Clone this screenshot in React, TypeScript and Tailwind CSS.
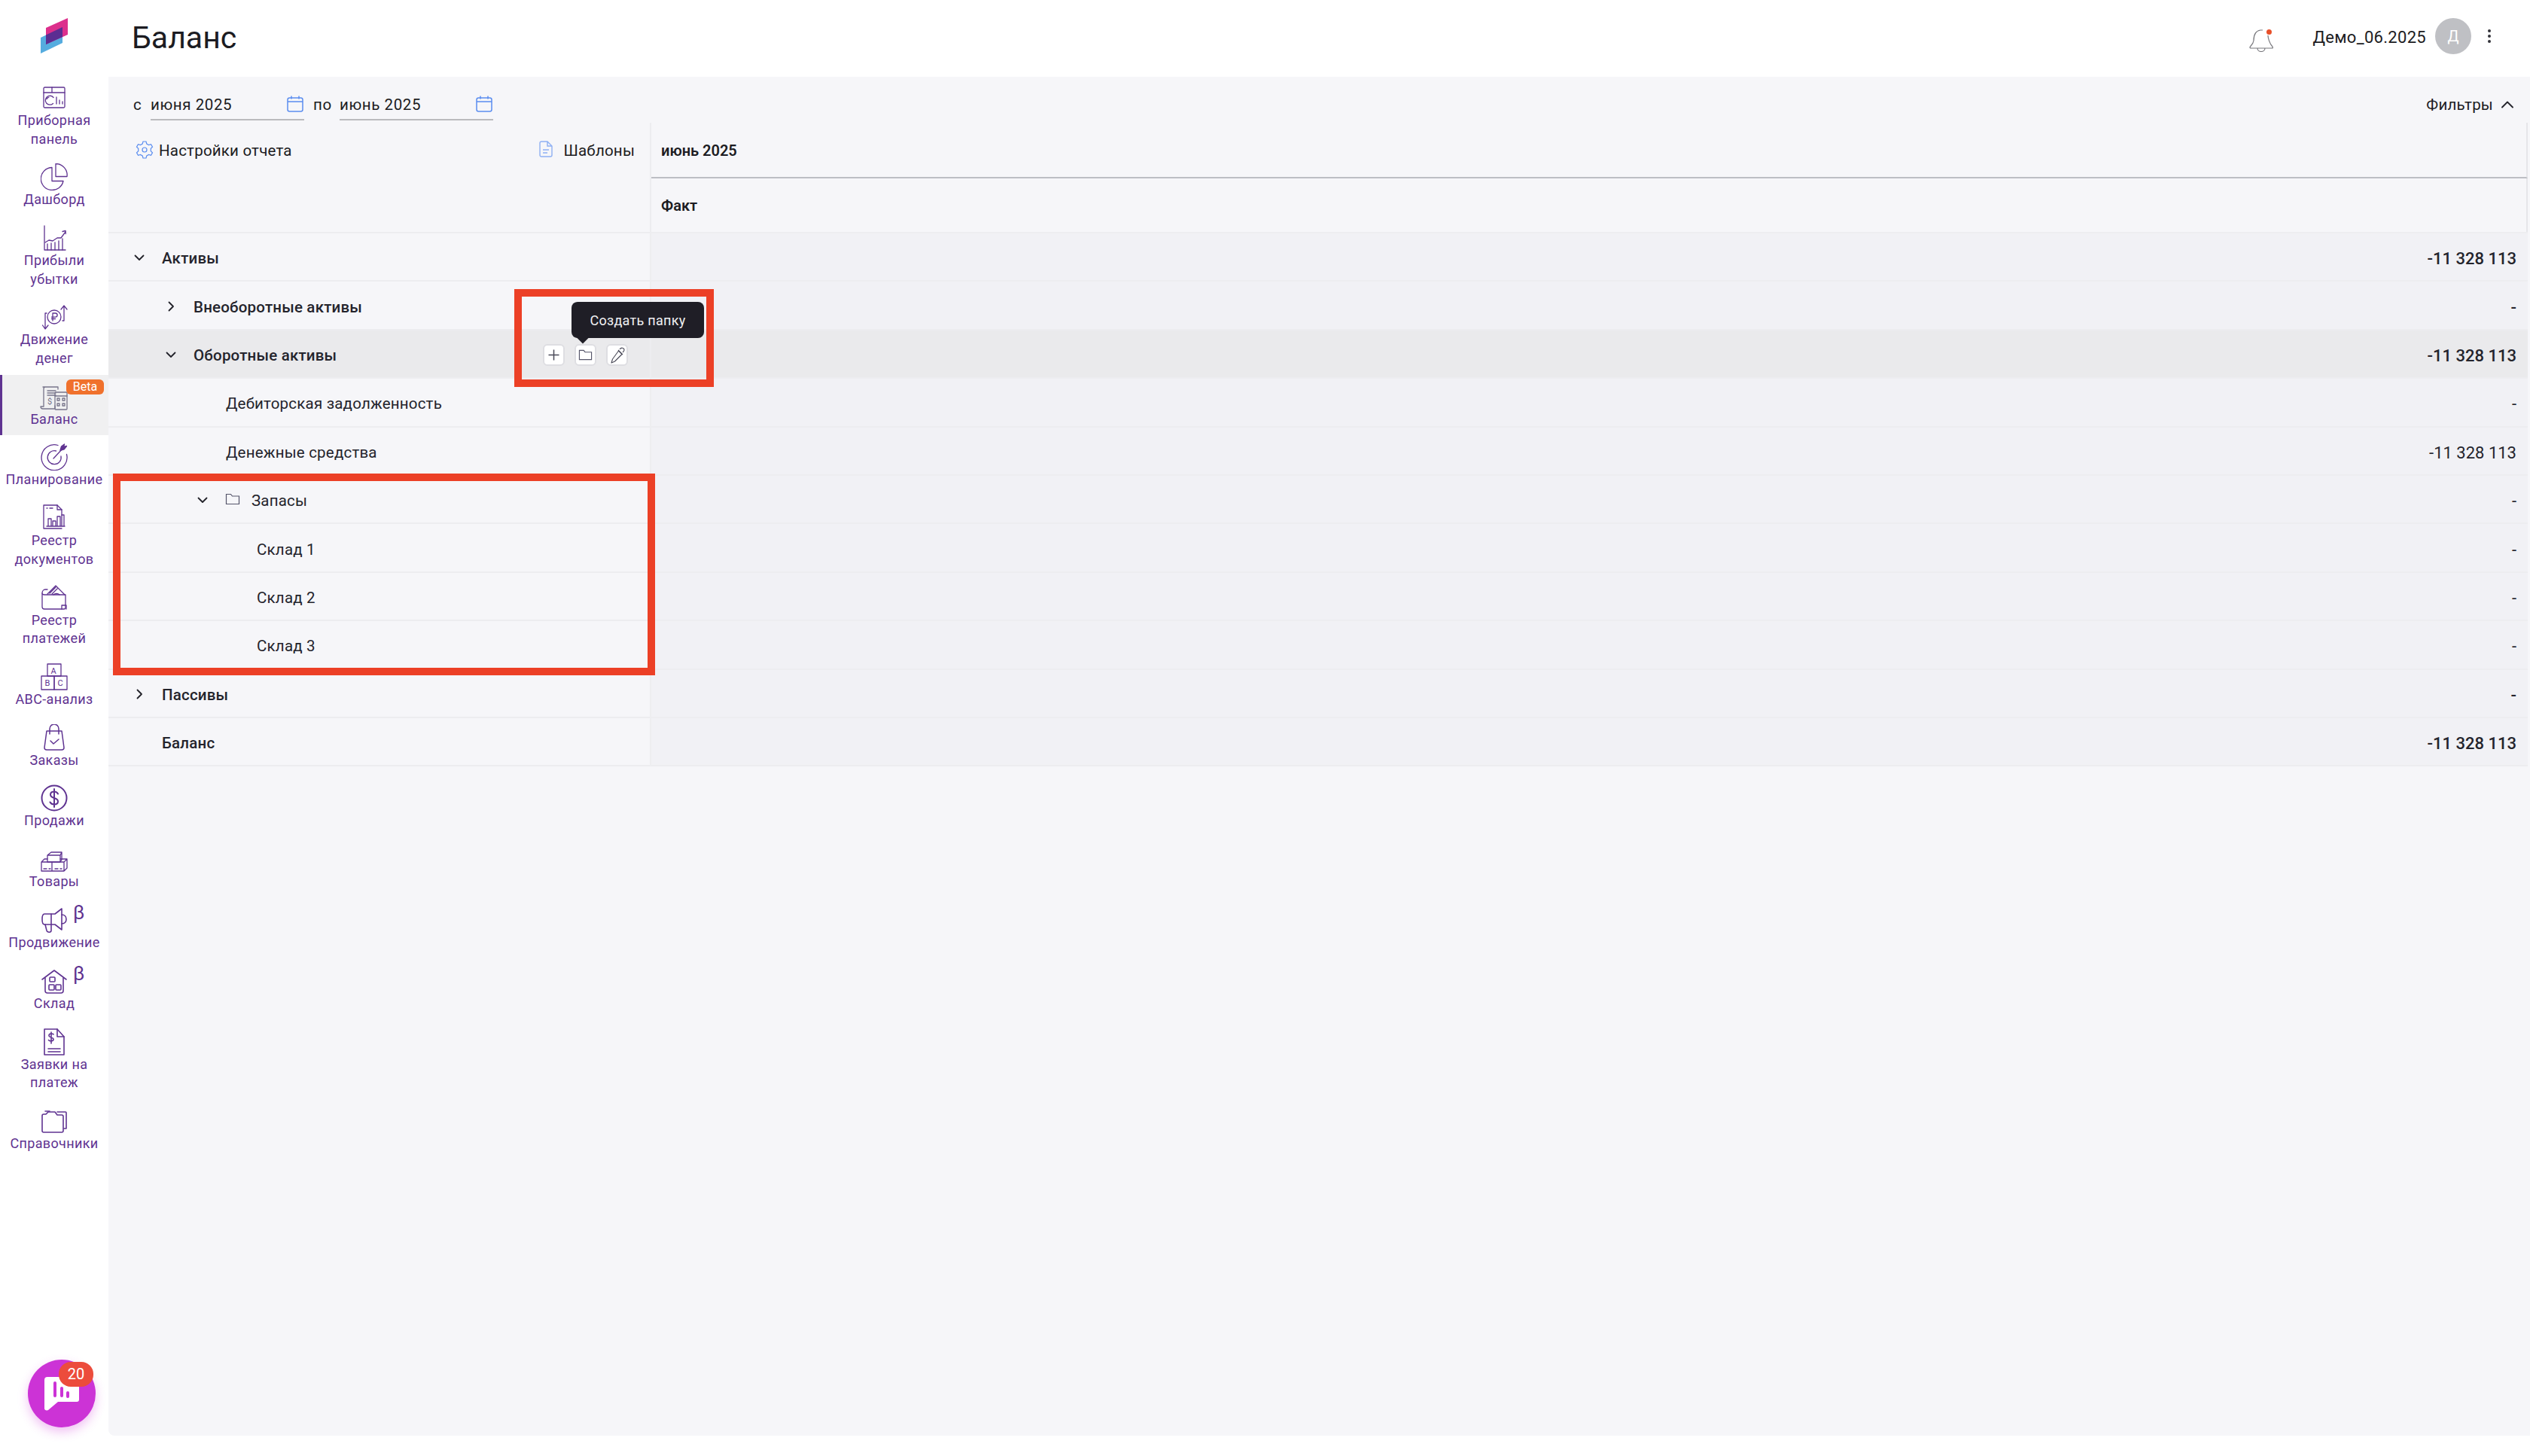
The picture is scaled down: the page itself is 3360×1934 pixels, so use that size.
import type { ReactNode } from 'react';

const PURPLE = '#5f3391';

function Ico({ w = 36, h = 36, box = '0 0 36 36', sw = 1.3, children }: { w?: number; h?: number; box?: string; sw?: number; children: ReactNode }) {
  return (
    <svg width={w} height={h} viewBox={box} fill="none" stroke={PURPLE} strokeWidth={sw} strokeLinecap="round" strokeLinejoin="round">
      {children}
    </svg>
  );
}

const icons: Record<string, ReactNode> = {
  panel: (
    <Ico>
      <rect x="4" y="4" width="28" height="27" rx="1.5" />
      <path d="M4 11h28M15 4v7" />
      <path d="M17 17.5a6 6 0 1 0 -.5 8 M8 19.5a6 6 0 0 1 3-2.5" />
      <path d="M21 17v9M25 21v5M29 23v3" />
    </Ico>
  ),
  pie: (
    <Ico>
      <path d="M16 6a15 15 0 1 0 15 18H16z" transform="translate(-1 -.5)" />
      <path d="M20 0.5a15 15 0 0 1 15 17H20z" />
    </Ico>
  ),
  profit: (
    <Ico>
      <path d="M5 2v32h28" />
      <path d="M6 24l5-3 5 1 6-4 5 0 6-8" />
      <path d="M29 9.5l4-1 .2 4" />
      <path d="M9 34v-8M14 34v-9M19 34v-10M24 34v-12M29 34v-15" />
    </Ico>
  ),
  money: (
    <Ico>
      <circle cx="18" cy="18" r="9" />
      <path d="M16 23v-10h3.5a2.6 2.6 0 0 1 0 5.200h-5M14.500 20.500h5" />
      <path d="M31 23h2V5M29 8l4-5 4 5" transform="translate(-2 0)" />
      <path d="M6 13H4v20M0.500 29L4 34l4-5" transform="translate(2 0)" />
    </Ico>
  ),
  balance: (
    <Ico w={38} h={36} box="0 0 38 36">
      <path stroke="#77748a" d="M4 5h20v3M7 5c-2 0-2 2-2 3v23H1c0 2 1 3 3 3h16v-4" />
      <path stroke="#77748a" d="M10 10h11M10 13h11M10 16h11" />
      <text x="10" y="28" fontSize="11" fill="#77748a" stroke="none" fontFamily="Roboto, sans-serif">$</text>
      <rect stroke="#77748a" x="20" y="12" width="16" height="23" rx="1" />
      <path stroke="#77748a" d="M20 17h16" />
      <rect stroke="#77748a" x="23" y="20" width="3" height="3" />
      <rect stroke="#77748a" x="30" y="20" width="3" height="3" />
      <rect stroke="#77748a" x="23" y="27" width="3" height="3" />
      <rect stroke="#77748a" x="30" y="27" width="3" height="3" />
    </Ico>
  ),
  plan: (
    <Ico>
      <path d="M23 2.500a17 17 0 1 0 11.500 12" />
      <path d="M20.500 10a9 9 0 1 0 6.500 7" />
      <path d="M17 20l12-13" />
      <path fill={PURPLE} d="M26 9l1.500-5 4-3-1 3.500 4-1-3.500 4.500-5 1.500z" />
    </Ico>
  ),
  docs: (
    <Ico>
      <path d="M28 14V7l-6-6H4v31h24" />
      <path d="M22 1v6h6M8 5h1M12 5h4" />
      <path d="M10 29V19h4v10M16 29V22h4v7M22 29V16h4v13M28 29V14h3v15M8 29h24" />
    </Ico>
  ),
  wallet: (
    <Ico>
      <path d="M2 12c0-3 2-5 4-5l3 0" />
      <path d="M2 12v18c0 2 1 3 3 3h26c1 0 2-1 2-2V14H5c-2 0-3-1-3-2z" />
      <path d="M9 13L20 2l12 12M12 12l8-8M15 13l8-8M25 14c-2-2-6-2-8 0" />
      <path d="M28 33v-5h6v5" />
    </Ico>
  ),
  abc: (
    <Ico box="0 0 36 36">
      <rect x="9" y="1" width="18" height="16" />
      <rect x="1" y="17" width="17" height="18" />
      <rect x="18" y="17" width="17" height="18" />
      <text x="13.500" y="13.500" fontSize="11" fill={PURPLE} stroke="none" fontFamily="Roboto, sans-serif">A</text>
      <text x="5.500" y="30" fontSize="11" fill={PURPLE} stroke="none" fontFamily="Roboto, sans-serif">B</text>
      <text x="22.500" y="30" fontSize="11" fill={PURPLE} stroke="none" fontFamily="Roboto, sans-serif">C</text>
    </Ico>
  ),
  orders: (
    <Ico sw={1.5}>
      <path d="M8 9h20l3 22c0 2-1 3-3 3H8c-2 0-3-1-3-3z" />
      <path d="M12 13V6a6 6 0 0 1 12 0v7" />
      <path d="M13 22l4 4 7-6" />
    </Ico>
  ),
  sales: (
    <Ico sw={2}>
      <circle cx="18" cy="18" r="16.500" />
      <path d="M23 12.500c-1-2-3-3-5-3-3 0-5 1.500-5 4s2 3.500 5 4.500 5 2 5 4.500-2 4-5 4c-2.500 0-4.500-1-5.500-3M18 6v24" />
    </Ico>
  ),
  goods: (
    <Ico>
      <path d="M9 13l5-4h14l-2 4H9zM26 13v9M28 9v10l-2 3M9 13v9h17" />
      <path d="M1 22l4-4M1 22h14v12H1zM15 22h16v12H15zM31 22l4-4v12l-4 4M5 18h4M26 18h9" />
      <path d="M4 31h4M11 31h2M19 31h4M26 31h2" />
    </Ico>
  ),
  promo: (
    <Ico>
      <path d="M5 10h14L28 3v28l-9-7H5c-2 0-3-3-3-7s1-7 3-7z" strokeWidth={1.6} />
      <path d="M14 10v14M28 11c4 0 6 3 6 6s-2 6-6 6M6 24l2 8c1 3 6 3 6 0v-8" strokeWidth={1.6} />
    </Ico>
  ),
  stock: (
    <Ico sw={1.6}>
      <path d="M2 16L18 4l16 12" />
      <path d="M6 14v17c0 2 1 3 3 3h18c2 0 3-1 3-3V14" />
      <rect x="12" y="13" width="7" height="6" rx="1" />
      <rect x="11" y="23" width="7" height="7" rx="1" />
      <rect x="20" y="23" width="7" height="7" rx="1" />
    </Ico>
  ),
  request: (
    <Ico sw={1.6}>
      <path d="M5 1h17l9 10v24H5z" />
      <path d="M22 1v10h9M10 27h16M10 31h16" />
      <path d="M17 8c-1-1.500-6-1.500-6 1.500s6 2 6 5-5 3-6.500 1M14 5v15" />
    </Ico>
  ),
  dict: (
    <Ico sw={1.6}>
      <path d="M2 11c0-1 1-2 2-2h3l3-3h9l3 4h6c1 0 2 1 2 2v19c0 1-1 2-2 2H4c-1 0-2-1-2-2z" />
      <path d="M6 5h6M22 6h11c1 0 1 1 1 1v21h-3" />
    </Ico>
  ),
};

const menu: { key: string; lines: string[]; active?: boolean; beta?: boolean; greek?: boolean }[] = [
  { key: 'panel', lines: ['Приборная', 'панель'] },
  { key: 'pie', lines: ['Дашборд'] },
  { key: 'profit', lines: ['Прибыли', 'убытки'] },
  { key: 'money', lines: ['Движение', 'денег'] },
  { key: 'balance', lines: ['Баланс'], active: true, beta: true },
  { key: 'plan', lines: ['Планирование'] },
  { key: 'docs', lines: ['Реестр', 'документов'] },
  { key: 'wallet', lines: ['Реестр', 'платежей'] },
  { key: 'abc', lines: ['ABC-анализ'] },
  { key: 'orders', lines: ['Заказы'] },
  { key: 'sales', lines: ['Продажи'] },
  { key: 'goods', lines: ['Товары'] },
  { key: 'promo', lines: ['Продвижение'], greek: true },
  { key: 'stock', lines: ['Склад'], greek: true },
  { key: 'request', lines: ['Заявки на', 'платеж'] },
  { key: 'dict', lines: ['Справочники'] },
];

function MenuItem({ item }: { item: (typeof menu)[number] }) {
  return (
    <div className={item.active ? 'relative flex flex-col items-center -mt-[11px] -mb-[9px] pt-[11px] pb-[9px] pr-[3px] bg-[#f0f0f1] border-l-[3px] border-[#5f3391]' : 'relative flex flex-col items-center'}>
      <div className="h-9 flex items-center justify-center">{icons[item.key]}</div>
      {item.lines.map((l) => (
        <div key={l} className="text-[18px] leading-[24.5px] tracking-[0.35px] text-[#5f3391] whitespace-nowrap">{l}</div>
      ))}
      {item.beta && (
        <span className="absolute top-[6px] right-[6px] w-[50px] h-5 rounded-md bg-[#f0712c] text-white text-[16px] leading-5 text-center">Beta</span>
      )}
      {item.greek && <span className="absolute -top-[9px] left-[97px] text-[26px] leading-[34px] text-[#5f3391]">β</span>}
    </div>
  );
}

function Calendar() {
  return (
    <svg width="22" height="22" viewBox="0 0 22 22" fill="none" stroke="#5b8def" strokeWidth="1.500" className="absolute right-[1px] top-[-3px]">
      <rect x="1" y="3" width="20" height="18" rx="2.500" />
      <path d="M1 8h20M6 0.500v4M16 0.500v4" />
    </svg>
  );
}

function Chevron({ dir }: { dir: 'down' | 'right' }) {
  return (
    <svg width="16" height="16" viewBox="0 0 16 16" fill="none" stroke="#22222a" strokeWidth="1.800" strokeLinecap="round" strokeLinejoin="round">
      {dir === 'down' ? <path d="M2.500 5.500L8 11l5.500-5.500" /> : <path d="M5.500 2.500L11 8l-5.500 5.500" />}
    </svg>
  );
}

function Folder({ size = 20 }: { size?: number }) {
  return (
    <svg width={size} height={size} viewBox="0 0 20 20" fill="none" stroke="#55556a" strokeWidth="1.200">
      <path d="M1.500 16.500V3.500h6l2 2.500h9v10.500z" />
    </svg>
  );
}

type Row = {
  label: string;
  pad: string;
  chevron?: 'down' | 'right';
  value: string;
  bold?: boolean;
  folder?: boolean;
  hover?: boolean;
};

const rows: Row[] = [
  { label: 'Активы', pad: 'pl-[33px]', chevron: 'down', value: '-11 328 113', bold: true },
  { label: 'Внеоборотные активы', pad: 'pl-[75px]', chevron: 'right', value: '-', bold: true },
  { label: 'Оборотные активы', pad: 'pl-[75px]', chevron: 'down', value: '-11 328 113', bold: true, hover: true },
  { label: 'Дебиторская задолженность', pad: 'pl-[156px]', value: '-' },
  { label: 'Денежные средства', pad: 'pl-[156px]', value: '-11 328 113' },
  { label: 'Запасы', pad: 'pl-[117px]', chevron: 'down', value: '-', folder: true },
  { label: 'Склад 1', pad: 'pl-[197px]', value: '-' },
  { label: 'Склад 2', pad: 'pl-[197px]', value: '-' },
  { label: 'Склад 3', pad: 'pl-[197px]', value: '-' },
  { label: 'Пассивы', pad: 'pl-[33px]', chevron: 'right', value: '-', bold: true },
  { label: 'Баланс', pad: 'pl-[71px]', value: '-11 328 113', bold: true },
];

function TableRow({ row }: { row: Row }) {
  return (
    <div className={row.hover ? 'flex h-[64.4px] border-b-2 border-[#ededf0] bg-[#eaeaec]' : 'flex h-[64.4px] border-b-2 border-[#ededf0]'}>
      <div className={`w-[721px] shrink-0 flex items-center pt-[5px] ${row.pad} border-r-2 border-[#ededf0] text-[20.5px] tracking-[0.2px] ${row.bold ? 'font-medium' : ''}`}>
        {row.chevron && (
          <span className="w-[16px] mr-[22px] flex justify-center -mt-[3px]">
            <Chevron dir={row.chevron} />
          </span>
        )}
        {row.folder && (
          <span className="mr-[15px] -mt-[6px] flex">
            <Folder />
          </span>
        )}
        <span className="whitespace-nowrap text-[#24242c]">{row.label}</span>
      </div>
      <div className={row.hover ? 'flex-1 flex items-center justify-end pt-[5px] pr-[15px]' : 'flex-1 flex items-center justify-end pt-[5px] pr-[15px] bg-[#f1f1f5]'}>
        <span className={row.bold ? 'text-[22px] font-medium text-[#24242c]' : 'text-[22px] text-[#24242c]'}>{row.value}</span>
      </div>
    </div>
  );
}

export default function App() {
  return (
    <div className="relative flex h-screen w-full bg-white overflow-hidden font-['Roboto',sans-serif] text-[#1c1c22]">
      {/* Sidebar */}
      <aside className="w-[144px] shrink-0 flex flex-col relative">
        <div className="h-[112px] relative shrink-0">
          <svg width="36" height="47" viewBox="54 24 36 47" className="absolute left-[54px] top-[24px]">
            <path d="M54 50L83 36v21L54 71z" fill="#55acdf" />
            <path d="M61 37L90 24v22L61 59z" fill="#dc2f8c" />
            <path d="M61 46.600L83 36v13L61 59z" fill="#5b2d92" />
          </svg>
        </div>
        <nav className="flex flex-col gap-[20.3px]">
          {menu.map((m) => (
            <MenuItem key={m.key} item={m} />
          ))}
        </nav>
        <div className="mt-auto mb-[38px] ml-[37px] relative w-[90px] h-[90px] rounded-full bg-[#cc33d6] shadow-[0_6px_14px_rgba(204,51,214,0.3)] flex items-center justify-center">
          <svg width="46" height="46" viewBox="0 0 46 46" className="ml-[-1px]">
            <path d="M4 1h38a4 4 0 0 1 4 4v26a3 3 0 0 1-3 3H18L5 45c-2 1-5 0-5-2V5a4 4 0 0 1 4-4z" fill="#fff" />
            <rect x="12" y="7" width="4" height="21" rx="2" fill="#cc33d6" />
            <rect x="21" y="14" width="4" height="14" rx="2" fill="#cc33d6" />
            <rect x="29" y="20" width="4" height="9" rx="2" fill="#cc33d6" />
          </svg>
          <span className="absolute left-[41px] top-[3px] w-[46px] h-[33px] rounded-[16px] bg-[#ec4c3c] text-white text-[20px] leading-[33px] text-center">20</span>
        </div>
      </aside>

      {/* Main */}
      <main className="flex-1 min-w-0 flex flex-col">
        <header className="h-[102px] shrink-0 flex items-center pl-[31px] pr-[52px]">
          <h1 className="text-[41px] leading-none text-[#1c1c22] -mt-[2px]">Баланс</h1>
          <div className="ml-auto flex items-center">
            <div className="relative w-[32px] h-[32px] mr-[52px] mt-[4px]">
              <svg width="32" height="32" viewBox="0 0 32 32" fill="none" stroke="#77777c" strokeWidth="1.200">
                <path d="M1 26c0-2 4-3 5-9 0-7 2-13 9-14h3M25 10c0 3 2 11 6 15 1 2 0 2-1 2H3c-2 0-2-1-2-1M11 27c0 6 10 6 10 0" />
              </svg>
              <span className="absolute right-[2px] top-[2px] w-[7px] h-[7px] rounded-full bg-[#e8502a]" />
            </div>
            <span className="text-[22px] tracking-[0.3px] mr-[12px] -mt-[3px]">Демо_06.2025</span>
            <span className="w-[48px] h-[48px] rounded-full bg-[#bfc0c4] text-white text-[20px] flex items-center justify-center mr-[22px] -mt-[6px]">Д</span>
            <span className="flex flex-col gap-[3px] -mt-[6px]">
              <span className="w-[4px] h-[4px] rounded-full bg-[#33333a]" />
              <span className="w-[4px] h-[4px] rounded-full bg-[#33333a]" />
              <span className="w-[4px] h-[4px] rounded-full bg-[#33333a]" />
            </span>
          </div>
        </header>

        <section className="flex-1 mb-[27px] bg-[#f6f6f9] rounded-bl-lg pr-[3px] flex flex-col">
          {/* Dates */}
          <div className="h-[61px] shrink-0 flex pl-[33px] pt-[21px] pr-[19px] text-[20.5px] tracking-[0.6px] leading-[32px]">
            <span className="w-[23px]">с</span>
            <div className="relative w-[204px] h-[37px] border-b-2 border-[#bbbbbe]">
              <span>июня 2025</span>
              <span className="absolute right-0 top-[7px] w-[22px] h-[22px]"><Calendar /></span>
            </div>
            <span className="w-[47px] pl-[12px]">по</span>
            <div className="relative w-[204px] h-[37px] border-b-2 border-[#bbbbbe]">
              <span>июнь 2025</span>
              <span className="absolute right-0 top-[7px] w-[22px] h-[22px]"><Calendar /></span>
            </div>
            <div className="ml-auto flex items-center h-[32px] gap-[11px]">
              <span className="tracking-[0.2px]">Фильтры</span>
              <svg width="16" height="16" viewBox="0 0 16 16" fill="none" stroke="#22222a" strokeWidth="1.800" strokeLinecap="round" strokeLinejoin="round">
                <path d="M1 11.500L8 4.500l7 7" />
              </svg>
            </div>
          </div>

          {/* Table head */}
          <div className="h-[147px] shrink-0 flex border-b-2 border-[#ededf0]">
            <div className="w-[721px] shrink-0 border-r-2 border-[#ededf0] flex items-start pt-[23px] pl-[36px] pr-[20px] text-[20.5px] tracking-[0.2px] leading-[28px]">
              <svg width="24" height="24" viewBox="0 0 24 24" fill="none" stroke="#5b8def" strokeWidth="1.200" className="mr-[7px] mt-[1px]">
                <path d="M10 1h4l.8 3 2.700 1.500 3-.8 2 3.400-2.200 2.200v3.400l2.200 2.200-2 3.400-3-.8L14.800 20l-.8 3h-4l-.8-3-2.700-1.500-3 .8-2-3.400 2.200-2.200v-3.400L1.500 8.100l2-3.400 3 .8L9.200 4z" />
                <circle cx="12" cy="12" r="3" />
              </svg>
              <span>Настройки отчета</span>
              <svg width="18" height="22" viewBox="0 0 18 22" fill="none" stroke="#8fb0f3" strokeWidth="1.400" className="ml-auto mr-[15px] mt-[1px]">
                <path d="M3 1h8l6 6v12a2 2 0 0 1-2 2H3a2 2 0 0 1-2-2V3a2 2 0 0 1 2-2zM11 1v6h6M5 12h8M5 16h6" />
              </svg>
              <span>Шаблоны</span>
            </div>
            <div className="flex-1 flex flex-col font-semibold text-[20px]">
              <div className="h-[74px] border-b-2 border-[#bcbec4] flex items-center pl-[13px] pt-[2px] border-r-2 border-r-[#e6e6ea]">июнь 2025</div>
              <div className="flex-1 flex items-center pl-[13px] border-r-2 border-[#e6e6ea]">Факт</div>
            </div>
          </div>

          {/* Table rows */}
          <div className="flex flex-col">
            {rows.map((r) => (
              <TableRow key={r.label} row={r} />
            ))}
          </div>
        </section>
      </main>

      {/* Hover actions on the "Оборотные активы" row */}
      <div className="absolute left-[721px] top-[457px] flex gap-[13px]">
        <span className="w-[29px] h-[29px] rounded-md bg-white border-2 border-[#dedee2] flex items-center justify-center">
          <svg width="15" height="15" viewBox="0 0 15 15" stroke="#4a4a58" strokeWidth="1.500"><path d="M7.500 0.500v14M0.500 7.500h14" /></svg>
        </span>
        <span className="w-[29px] h-[29px] rounded-md bg-white border-2 border-[#dedee2] flex items-center justify-center">
          <Folder size={19} />
        </span>
        <span className="w-[29px] h-[29px] rounded-md bg-white border-2 border-[#dedee2] flex items-center justify-center">
          <svg width="24" height="24" viewBox="0 0 24 24" fill="none" stroke="#4a4a58" strokeWidth="1.100" strokeLinejoin="round">
            <path d="M13.500 6l4.500 4.500-9.500 9.500-4.500 2 1.500-5zM13 5l6 6M15 4c2-3 6-2 6 1 0 1-1 2-2 3" />
          </svg>
        </span>
      </div>

      {/* Tooltip */}
      <div className="absolute left-[759px] top-[401px] w-[176px] h-[48px] rounded-lg bg-[#1f1e26] text-[#f0f0f2] text-[18px] tracking-[0.3px] flex items-center justify-center">
        Создать папку
        <span className="absolute left-[9px] -bottom-[5px] w-[12px] h-[12px] rotate-45 bg-[#1f1e26]" />
      </div>

      {/* Annotation frames */}
      <div className="absolute left-[683px] top-[384px] w-[265px] h-[130px] border-[10px] border-[#ec4026]" />
      <div className="absolute left-[150px] top-[629px] w-[720px] h-[268px] border-[10px] border-[#ec4026]" />
    </div>
  );
}
